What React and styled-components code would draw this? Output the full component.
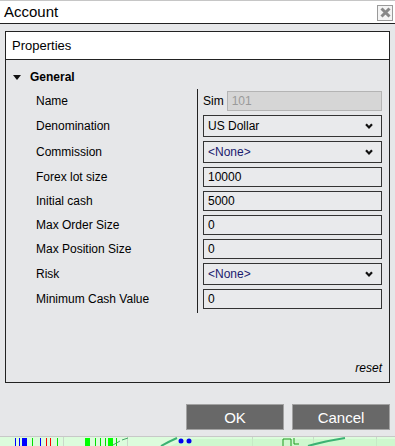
import React from 'react';
import styled, { createGlobalStyle } from 'styled-components';

const GlobalStyle = createGlobalStyle`
  html, body {
    margin: 0;
    padding: 0;
    background: #e6e7e9;
    font-family: "Liberation Sans", Arial, sans-serif;
    color: #000;
  }
`;

const Page = styled.div`
  width: 395px;
  height: 446px;
  display: flex;
  flex-direction: column;
  overflow: hidden;
`;

const Window = styled.div`
  height: 436px;
  display: flex;
  flex-direction: column;
  background: #e6e7e9;
  border-top: 1px solid #c6c6c6;
  box-sizing: border-box;
`;

const TitleBar = styled.div`
  height: 22px;
  flex: none;
  display: flex;
  align-items: center;
  justify-content: space-between;
  padding: 0 2px 0 4px;
  background: #fff;
  border-bottom: 1px solid #222;
`;

const Title = styled.div`
  font-size: 15px;
  line-height: 22px;
`;

const CloseButton = styled.div`
  width: 14px;
  height: 14px;
  border: 1px solid #9a9a9a;
  background: #f4f4f4;
  display: flex;
  align-items: center;
  justify-content: center;
  margin-top: 1px;
`;

const Body = styled.div`
  flex: 1;
  display: flex;
  flex-direction: column;
  padding: 7px 5px 6px 5px;
`;

const Panel = styled.div`
  height: 352px;
  display: flex;
  flex-direction: column;
  border: 1px solid #222;
  box-sizing: border-box;
`;

const PanelHeader = styled.div`
  height: 27px;
  flex: none;
  display: flex;
  align-items: center;
  padding-left: 6px;
  background: #fff;
  border-bottom: 1px solid #222;
  font-size: 13px;
`;

const PanelContent = styled.div`
  flex: 1;
  padding-top: 8px;
  display: flex;
  flex-direction: column;
`;

const Category = styled.div`
  height: 18px;
  display: flex;
  align-items: center;
  gap: 9px;
  padding-left: 7px;
  margin-bottom: 3px;
  font-size: 12px;
  font-weight: bold;
`;

const Grid = styled.div`
  display: grid;
  grid-template-columns: 191px 1fr;
`;

const Labels = styled.div`
  display: flex;
  flex-direction: column;
  padding-left: 30px;
`;

const Values = styled.div`
  display: flex;
  flex-direction: column;
  border-left: 1px solid #222;
  padding: 0 7px 2px 5px;
`;

const LabelCell = styled.div`
  height: ${p => (p.$select ? 26 : 24)}px;
  display: flex;
  align-items: center;
  font-size: 12px;
`;

const ValueCell = styled.div`
  height: ${p => (p.$select ? 26 : 24)}px;
  display: flex;
  align-items: center;
  gap: 3px;
  font-size: 12px;
`;

const Box = styled.div`
  flex: 1;
  height: ${p => (p.$select ? 22 : 20)}px;
  box-sizing: border-box;
  display: flex;
  align-items: center;
  justify-content: space-between;
  padding: 0 8px 0 4px;
  border: 1px solid ${p => (p.$disabled ? '#b4b4b4' : '#333')};
  background: ${p => (p.$disabled ? '#d6d6d6' : '#e9eaec')};
  color: ${p => (p.$disabled ? '#9a9a9a' : p.$navy ? '#1a1a6e' : '#000')};
  font-size: 12px;
`;

const Prefix = styled.span`
  font-size: 12px;
`;

const Footer = styled.div`
  margin-top: auto;
  display: flex;
  justify-content: flex-end;
  padding: 0 7px 7px 0;
`;

const Reset = styled.span`
  font-size: 12px;
  font-style: italic;
`;

const ButtonRow = styled.div`
  margin-top: auto;
  display: flex;
  justify-content: flex-end;
  gap: 8px;
`;

const Button = styled.div`
  width: 98px;
  height: 26px;
  box-sizing: border-box;
  display: flex;
  align-items: center;
  justify-content: center;
  background: #686868;
  border: 1px solid #a2a2a2;
  color: #fff;
  font-size: 15px;
`;

const Strip = styled.svg`
  display: block;
  flex: none;
`;

const Chevron = () => (
  <svg width="8" height="6" viewBox="0 0 8 6">
    <polyline points="1,1.2 4,4.4 7,1.2" fill="none" stroke="#111" strokeWidth="2.2" />
  </svg>
);

const Triangle = () => (
  <svg width="8" height="5" viewBox="0 0 8 5">
    <polygon points="0,0 8,0 4,5" fill="#111" />
  </svg>
);

const CloseX = () => (
  <svg width="11" height="11" viewBox="0 0 11 11">
    <path d="M1.5 1.5 L9.5 9.5 M9.5 1.5 L1.5 9.5" stroke="#888" strokeWidth="3" />
  </svg>
);

const rows = [
  { label: 'Name', value: '101', prefix: 'Sim', disabled: true },
  { label: 'Denomination', value: 'US Dollar', select: true },
  { label: 'Commission', value: '<None>', select: true, navy: true },
  { label: 'Forex lot size', value: '10000' },
  { label: 'Initial cash', value: '5000' },
  { label: 'Max Order Size', value: '0' },
  { label: 'Max Position Size', value: '0' },
  { label: 'Risk', value: '<None>', select: true, navy: true },
  { label: 'Minimum Cash Value', value: '0' },
];

const ChartStrip = () => (
  <Strip width="395" height="10" viewBox="0 0 395 10">
    <rect x="0" y="0" width="395" height="10" fill="#dcfcdc" />
    <rect x="0" y="0" width="395" height="1" fill="#c8c8c8" />
    {[63, 127, 252, 313, 376].map(x => (
      <rect key={x} x={x} y="1" width="1" height="9" fill="#c9d9c9" />
    ))}
    <rect x="15" y="2" width="1" height="8" fill="#0000ff" />
    <rect x="19" y="2" width="1" height="8" fill="#0000ff" />
    <rect x="22" y="2" width="5" height="8" fill="#0000ff" />
    <rect x="32" y="2" width="1" height="8" fill="#00e000" />
    <rect x="40" y="2" width="1" height="8" fill="#0000ff" />
    <rect x="46" y="2" width="1" height="8" fill="#ff0000" />
    <rect x="50" y="2" width="1" height="8" fill="#ff0000" />
    <rect x="57" y="2" width="1" height="8" fill="#00e000" />
    <rect x="85" y="2" width="5" height="8" fill="#00ff00" />
    <rect x="95" y="2" width="1" height="8" fill="#00e000" />
    <rect x="100" y="2" width="1" height="8" fill="#00e000" />
    <rect x="105" y="2" width="1" height="8" fill="#00e000" />
    <rect x="108" y="2" width="5" height="8" fill="#00ff00" />
    <rect x="116" y="2" width="1" height="8" fill="#00e000" />
    <path d="M113 9 L120 5 M122 4 L128 2" stroke="#44aa66" strokeWidth="1" />
    <path d="M125 10 L170 10 L185 3 L395 3 L395 10 Z" fill="#c4f5c4" opacity="0.6" />
    <path d="M161 10 Q170 5 177 2" stroke="#3bb273" strokeWidth="2" fill="none" />
    <circle cx="181" cy="5" r="2.5" fill="#0000ee" />
    <circle cx="189" cy="5" r="2.5" fill="#0000ee" />
    <path d="M283 10 L283 3 L291 3 L291 10 M294 2 L294 8 L299 8" stroke="#1f9a1f" strokeWidth="1" fill="none" />
    <path d="M308 10 Q325 5 345 2" stroke="#3bb273" strokeWidth="2" fill="none" />
  </Strip>
);

const App = () => (
  <Page>
    <GlobalStyle />
    <Window>
      <TitleBar>
        <Title>Account</Title>
        <CloseButton><CloseX /></CloseButton>
      </TitleBar>
      <Body>
        <Panel>
          <PanelHeader>Properties</PanelHeader>
          <PanelContent>
            <Category>
              <Triangle />
              General
            </Category>
            <Grid>
              <Labels>
                {rows.map(r => (
                  <LabelCell key={r.label} $select={r.select}>{r.label}</LabelCell>
                ))}
              </Labels>
              <Values>
                {rows.map(r => (
                  <ValueCell key={r.label} $select={r.select}>
                    {r.prefix && <Prefix>{r.prefix}</Prefix>}
                    <Box $select={r.select} $disabled={r.disabled} $navy={r.navy}>
                      <span>{r.value}</span>
                      {r.select && <Chevron />}
                    </Box>
                  </ValueCell>
                ))}
              </Values>
            </Grid>
          </PanelContent>
          <Footer>
            <Reset>reset</Reset>
          </Footer>
        </Panel>
        <ButtonRow>
          <Button>OK</Button>
          <Button>Cancel</Button>
        </ButtonRow>
      </Body>
    </Window>
    <ChartStrip />
  </Page>
);

export default App;
